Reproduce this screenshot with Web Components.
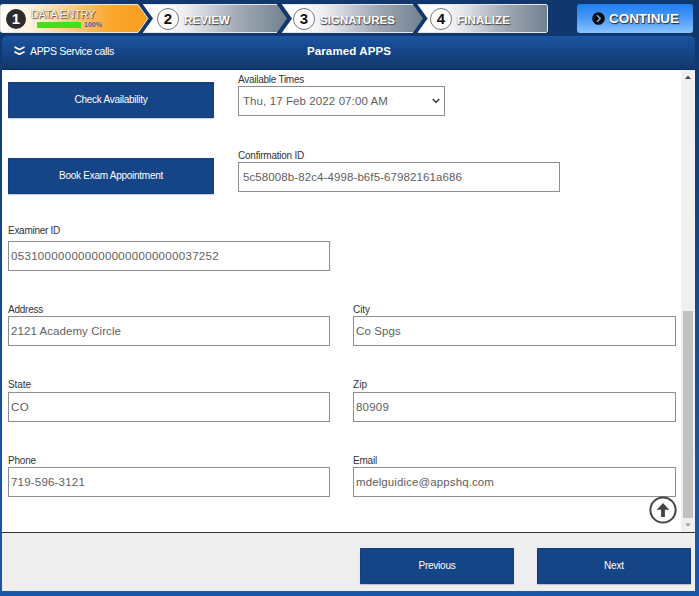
<!DOCTYPE html>
<html lang="en">
<head>
<meta charset="utf-8">
<title>Paramed APPS</title>
<style>
html,body{margin:0;width:699px;height:596px;overflow:hidden;font-family:"Liberation Sans",Arial,sans-serif}
</style>
</head>
<body>
<paramed-app></paramed-app>
<script>
const define = (name, html, ready) => customElements.define(name, class extends HTMLElement {
  connectedCallback() {
    if (this.shadowRoot) return;
    const root = this.attachShadow({mode: 'open'});
    const t = document.createElement('template');
    t.innerHTML = typeof html === 'function' ? html(this) : html;
    root.append(t.content.cloneNode(true));
    if (ready) ready(this);
  }
});

/* Single line of text tracked to an exact width */
define('fit-text', el => `
<style>:host{display:inline-block;white-space:nowrap;line-height:14px}span{display:inline-block}</style>
<span>${el.getAttribute('text')}</span>`, el => {
  const s = el.shadowRoot.querySelector('span');
  const w = +el.getAttribute('w');
  s.style.letterSpacing = (w - s.getBoundingClientRect().width) / el.getAttribute('text').length + 'px';
});

define('wizard-step', el => {
  const last = el.hasAttribute('last'), active = el.hasAttribute('active');
  const w = +el.getAttribute('width');
  const shape = last ? `M2 .5H${w-2}Q${w-.5} .5 ${w-.5} 2.5V26.5Q${w-.5} 28.5 ${w-2} 28.5H2L12 14.5Z`
    : active ? `M2.5 .5H${w-12}L${w-2} 14.5L${w-12} 28.5H2.5Q.5 28.5 .5 26.5V2.5Q.5 .5 2.5 .5Z`
    : `M2 .5H${w-12}L${w-2} 14.5L${w-12} 28.5H2L12 14.5Z`;
  return `
<style>
:host{display:grid;width:${w}px;height:29px;flex:none;margin-right:-9px}
svg,.row{grid-area:1/1}
.row{display:flex;align-items:center;z-index:1;padding-left:${active ? 6 : el.getAttribute('inset')}px;gap:${active ? 5 : 5}px}
.n{box-sizing:border-box;width:22px;height:22px;border-radius:50%;display:grid;place-items:center;font:bold 15px/20px "Liberation Sans",sans-serif;border:1.5px solid #777;background:#fff;color:#111}
.active .n{width:20px;height:20px;border:0;background:#2c2a2b;color:#fff;font-size:15px}
.t{font-weight:bold;font-size:11.5px;color:#fff;text-shadow:1px 1px 1px #4c4c4c,0 1px 1px #777;margin-top:2px}
.active .t{font-size:11px;font-weight:normal;margin-top:-1px;text-shadow:1px 1px 1px #5a4a31,0 0 1px #635237}
.t fit-text{display:block}
.p{display:flex;align-items:center;gap:3px;margin:-1px 0 0 6px;height:10px;text-shadow:none;font-size:7px;color:#4c62a5}
.p i{width:44px;height:6px;background:#42e11c}.p fit-text{line-height:10px;font-weight:bold}
</style>
<svg width="${w}" height="29"><defs><linearGradient id="g">${active
 ? '<stop offset="0" stop-color="#fff"/><stop offset=".2" stop-color="#fff3df"/><stop offset=".75" stop-color="#faa72e"/><stop offset="1" stop-color="#f99e20"/>'
 : '<stop offset=".12" stop-color="#fff"/><stop offset=".3" stop-color="#ededf0"/><stop offset=".65" stop-color="#a3acb8"/><stop offset="1" stop-color="#71808f"/>'}</linearGradient></defs>
<path d="${shape}" fill="url(#g)" stroke="${active || last ? '#e9e5df' : 'none'}"/>${active || last ? '' : `<path d="M2 .5H${w-12}M2 28.5H${w-12}" stroke="#e4e6ea"/>`}</svg>
<div class="row ${active ? 'active' : ''}"><span class="n">${el.getAttribute('num')}</span>
<div class="t"><fit-text text="${el.getAttribute('label')}" w="${el.getAttribute('tw')}"></fit-text>${active ? '<div class="p"><i></i><fit-text text="100%" w="18"></fit-text></div>' : ''}</div></div>`;
});

define('continue-button', `
<style>
:host{display:flex;box-sizing:border-box;width:116px;height:29px;border-radius:3px;background:linear-gradient(#207cf1,#4b9bf8 50%,#8bc3ff);padding-left:15px;align-items:center;gap:4px;color:#fff;font-weight:bold;font-size:13.5px;text-shadow:1px 1px 1px #333,0 1px 1px #555}
svg{display:block}
</style>
<svg width="13" height="13" viewBox="0 0 13 13"><circle cx="6.5" cy="6.5" r="6.3" fill="#080b10"/><path d="M5 3.2L8.2 6.5L5 9.8" fill="none" stroke="#7db5ee" stroke-width="1.5"/></svg>
<fit-text text="CONTINUE" w="70"></fit-text>`);

define('title-bar', `
<style>
:host{display:grid;grid-template-columns:305px auto 1fr;align-items:center;box-sizing:border-box;height:34px;padding-bottom:3px;background:linear-gradient(#1a54a2,#12376a);border-bottom:1px solid #0a2d66;border-radius:5px 5px 0 0;color:#fff;font-size:10.5px}
.l{display:flex;align-items:center;padding-left:12px;gap:5px}
b{font-size:11.5px}
</style>
<div class="l"><svg width="11" height="10" viewBox="0 0 11 10"><path d="M.5 1L5.5 3.5L10.5 1M.5 5.7L5.5 8.2L10.5 5.7" fill="none" stroke="#fff" stroke-width="1.7"/></svg><fit-text text="APPS Service calls" w="84"></fit-text></div>
<b><fit-text text="Paramed APPS" w="84"></fit-text></b>`);

define('push-button', el => `
<style>
:host{display:grid;place-items:center;width:${el.getAttribute('width')}px;height:36px;border-radius:1px;background:#154586;box-shadow:inset 0 0 0 .5px #0f3a78,0 1px 1px #0003;color:#fff;font-size:10px}
</style><fit-text text="${el.getAttribute('label')}" w="${el.getAttribute('tw')}"></fit-text>`);

define('form-field', el => `
<style>
:host{display:block;width:${el.getAttribute('width')}px}
label{display:block;height:14px;font-size:10px;color:#333;margin-bottom:${el.getAttribute('gap') || 0}px}
label fit-text{display:block;line-height:16px}
.box{box-sizing:border-box;height:30px;border:1px solid #8e8e8e;display:flex;align-items:center;justify-content:space-between;padding:0 4px 0 ${el.getAttribute('pad') || 2}px;font-size:11.5px;color:#606060}
</style>
<label><fit-text text="${el.getAttribute('label')}" w="${el.getAttribute('lw')}"></fit-text></label>
<div class="box"><fit-text text="${el.getAttribute('value')}" w="${el.getAttribute('vw')}"></fit-text>${el.hasAttribute('select') ? '<svg width="8" height="6" viewBox="0 0 8 6"><path d="M.7 1L4 4.4L7.3 1" fill="none" stroke="#444" stroke-width="1.6"/></svg>' : ''}</div>`);

define('scroll-bar', `
<style>
:host{display:flex;flex-direction:column;align-items:center;width:14px;background:#f0f0f0;height:462px}
svg{flex:none}.track{flex:1;width:100%;padding-top:227px;box-sizing:border-box}
.thumb{height:207px;width:10px;margin-left:2px;background:#c1c1c1}
</style>
<svg width="14" height="14"><path d="M4 9L7 5.5L10 9Z" fill="#484848"/></svg>
<div class="track"><div class="thumb"></div></div>
<svg width="14" height="14"><path d="M4 5.5L7 8.5L10 5.5Z" fill="#999"/></svg>`);

define('top-button', `
<style>:host{display:block;width:28px;height:28px}svg{display:block}</style>
<svg width="28" height="28" viewBox="0 0 28 28"><circle cx="14" cy="14" r="12.6" fill="#fff" stroke="#444" stroke-width="2"/><path d="M14 7L20.3 13.7H15.9V21H12.1V13.7H7.7Z" fill="#444"/></svg>`);

define('paramed-app', `
<style>
:host{display:flex;flex-direction:column;box-sizing:border-box;width:699px;height:596px;padding:4px 4px 5px 2px;background:linear-gradient(#10386f 0,#10386f 40px,#164a91 300px,#1b57a8 520px)}
header{display:flex;height:29px;padding-right:2px;margin-left:-2px;margin-bottom:3px}
continue-button{margin-left:auto}
.body{position:relative;display:flex;height:462px;background:#fff;justify-content:space-between}
.form{padding:2px 0 0 6px}
.row{display:flex}
.a{gap:24px}.a push-button{margin-top:10px}
.b{gap:24px}
top-button{position:absolute;left:647px;top:426px}
footer{display:flex;flex:1;box-sizing:border-box;border-top:1px solid #333;background:#eee;justify-content:flex-end;gap:23px;padding:15px 4px 0 0}
</style>
<header>
<wizard-step active num="1" label="DATA ENTRY" width="150" tw="64"></wizard-step>
<wizard-step num="2" label="REVIEW" width="148" tw="46" inset="16"></wizard-step>
<wizard-step num="3" label="SIGNATURES" width="145" tw="75" inset="13"></wizard-step>
<wizard-step last num="4" label="FINALIZE" width="132" tw="53" inset="14"></wizard-step>
<continue-button></continue-button>
</header>
<title-bar></title-bar>
<div class="body">
<div class="form">
<div class="row a" style="height:76px"><push-button label="Check Availability" width="206" tw="73"></push-button><form-field select label="Available Times" lw="66" value="Thu, 17 Feb 2022 07:00 AM" vw="145" width="207" pad="4"></form-field></div>
<div class="row a" style="height:75px"><push-button label="Book Exam Appointment" width="206" tw="104"></push-button><form-field label="Confirmation ID" lw="66" value="5c58008b-82c4-4998-b6f5-67982161a686" vw="219" width="322" pad="4"></form-field></div>
<div class="row b" style="height:79px"><form-field gap="4" label="Examiner ID" lw="52" value="0531000000000000000000000037252" vw="208" width="322"></form-field></div>
<div class="row b" style="height:75px"><form-field label="Address" lw="35" value="2121 Academy Circle" vw="110" width="322"></form-field><form-field label="City" lw="17" value="Co Spgs" vw="45" width="323" style="margin-left:-1px"></form-field></div>
<div class="row b" style="height:76px"><form-field gap="1" label="State" lw="23" value="CO" vw="18" width="322"></form-field><form-field gap="1" label="Zip" lw="14" value="80909" vw="33" width="323" style="margin-left:-1px"></form-field></div>
<div class="row b"><form-field label="Phone" lw="28" value="719-596-3121" vw="74" width="322"></form-field><form-field label="Email" lw="24" value="mdelguidice@appshq.com" vw="138" width="323" style="margin-left:-1px"></form-field></div>
</div>
<scroll-bar></scroll-bar>
<top-button></top-button>
</div>
<footer><push-button label="Previous" width="154" tw="37"></push-button><push-button label="Next" width="154" tw="20"></push-button></footer>`);
</script>
</body>
</html>
